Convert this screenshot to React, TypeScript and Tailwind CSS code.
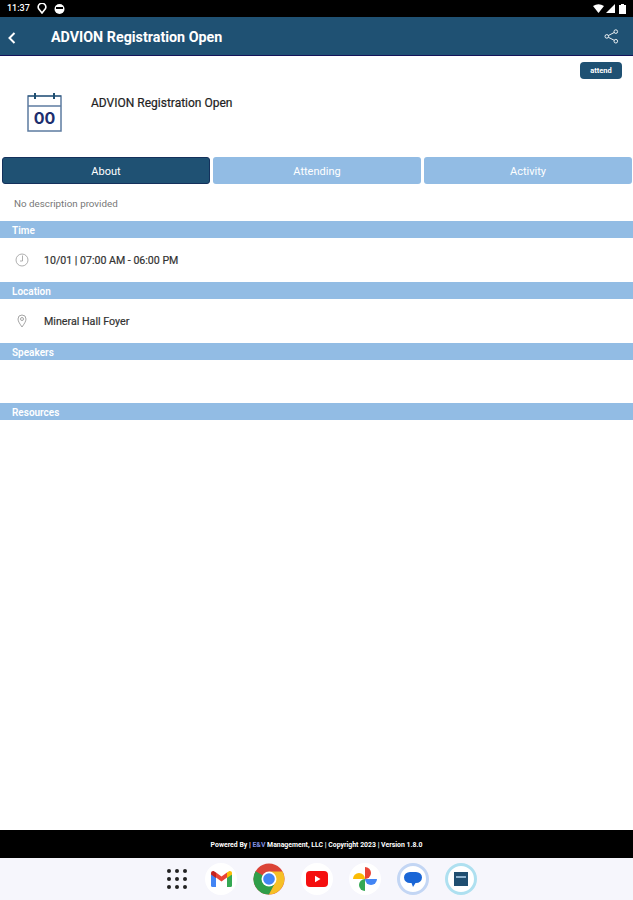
import type { ReactNode } from 'react'

const tabs = ['About', 'Attending', 'Activity']

function SectionBar({ title }: { title: string }) {
  return (
    <div className="h-[17px] bg-[#92bce4] pl-3 pt-px text-[10px] font-semibold leading-[17px] text-white">
      {title}
    </div>
  )
}

function CalendarIcon() {
  return (
    <svg width="36" height="40" viewBox="0 0 36 40" fill="none">
      <rect x="1" y="4" width="33" height="35" stroke="#5c7ba0" strokeWidth="1.5" />
      <path d="M1 14H34" stroke="#5c7ba0" strokeWidth="1.5" />
      <path d="M8 1V7M27 1V7" stroke="#1f4e70" strokeWidth="2" />
      <path d="M1 4H34" stroke="#1f4e70" strokeWidth="1" />
      <text x="17.5" y="32" textAnchor="middle" fontSize="16" fontWeight="700" fill="#1d2f6f" fontFamily="Inter, sans-serif">00</text>
    </svg>
  )
}

function ClockIcon() {
  return (
    <svg width="14" height="14" viewBox="0 0 14 14" fill="none" stroke="#9a9a9a" strokeWidth="0.8">
      <circle cx="7" cy="7" r="6" />
      <path d="M7.500 2.500V8H5" />
    </svg>
  )
}

function PinIcon() {
  return (
    <svg width="10" height="14" viewBox="0 0 10 14" fill="none" stroke="#a5a5a5" strokeWidth="1">
      <path d="M5 13C3 10 1 7.500 1 5A4 4 0 0 1 9 5C9 7.500 7 10 5 13Z" />
      <circle cx="5" cy="5" r="1.500" />
    </svg>
  )
}

function ShareIcon() {
  return (
    <svg width="15" height="15" viewBox="0 0 15 15" fill="none" stroke="#ffffff" strokeWidth="0.9">
      <circle cx="11.800" cy="2.600" r="1.800" />
      <circle cx="2.800" cy="7.400" r="1.800" />
      <circle cx="11.800" cy="12.200" r="1.800" />
      <path d="M4.400 6.500L10.200 3.500M4.400 8.300L10.200 11.300" />
    </svg>
  )
}

function GmailIcon() {
  return (
    <svg width="21" height="16" viewBox="0 0 21 16" fill="none">
      <path d="M0 3V14.500A1.500 1.500 0 0 0 1.500 16H5V6Z" fill="#4285f4" />
      <path d="M21 3V14.500A1.500 1.500 0 0 1 19.500 16H16V6Z" fill="#34a853" />
      <path d="M5 6.500L10.500 10.500L16 6.500V1.500L10.500 5.500L5 1.500Z" fill="#ea4335" />
      <path d="M0 3.500L5 7V1.500L3 0.300C1.700 -0.400 0 0.500 0 2.200Z" fill="#c5221f" />
      <path d="M21 3.500L16 7V1.500L18 0.300C19.300 -0.400 21 0.500 21 2.200Z" fill="#fbbc04" />
    </svg>
  )
}

function ChromeIcon() {
  return (
    <svg width="32" height="32" viewBox="0 0 32 32">
      <circle cx="16" cy="16" r="15.500" fill="#db4437" />
      <path d="M16 16L2.600 8.200A15.500 15.500 0 0 0 16 31.500L23.500 18Z" fill="#2f9e49" />
      <path d="M16 8.500H29.500A15.500 15.500 0 0 1 16 31.500L23 18Z" fill="#f6c026" />
      <circle cx="16" cy="16" r="7.500" fill="#ffffff" />
      <circle cx="16" cy="16" r="5.800" fill="#4285f4" />
    </svg>
  )
}

function YoutubeIcon() {
  return (
    <svg width="22" height="16" viewBox="0 0 22 16">
      <rect width="22" height="16" rx="4" fill="#f50f0f" />
      <path d="M9 4.800V11.200L14.500 8Z" fill="#ffffff" />
    </svg>
  )
}

// pinwheel: four half discs turning clockwise round the centre
function PhotosIcon() {
  return (
    <svg width="24" height="24" viewBox="0 0 24 24">
      <path d="M0 12A6 6 0 0 1 12 12Z" fill="#fbbc04" />
      <path d="M12 0A6 6 0 0 1 12 12Z" fill="#ea4335" />
      <path d="M24 12A6 6 0 0 1 12 12Z" fill="#4285f4" />
      <path d="M12 24A6 6 0 0 1 12 12Z" fill="#34a853" />
    </svg>
  )
}

function DockBubble({ children, ring }: { children: ReactNode; ring?: string }) {
  return (
    <div className={`flex h-8 w-8 items-center justify-center rounded-full bg-white ${ring ?? ''}`}>
      {children}
    </div>
  )
}

export default function App() {
  return (
    <div className="flex h-[900px] w-[633px] flex-col overflow-hidden bg-white font-['Roboto',sans-serif]">
      {/* Status bar */}
      <div className="flex h-[17px] items-center justify-between bg-black pl-[7px] pr-[7px] text-white">
        <div className="flex items-center gap-[7px]">
          <span className="text-[9px] font-medium">11:37</span>
          <svg width="10" height="11" viewBox="0 0 10 11" fill="none" stroke="#fff" strokeWidth="1.600">
            <path d="M5 10L1.500 5.500A3.800 3.800 0 1 1 8.500 5.500Z" />
          </svg>
          <svg width="11" height="10" viewBox="0 0 11 10">
            <circle cx="5.500" cy="5" r="5" fill="#fff" />
            <rect x="2" y="3" width="7" height="2" fill="#000" />
          </svg>
        </div>
        <div className="flex items-center gap-[2px]">
          <svg width="11" height="9" viewBox="0 0 11 9"><path d="M0 2Q5.500 -1.500 11 2L5.500 9Z" fill="#fff" /></svg>
          <svg width="9" height="9" viewBox="0 0 9 9"><path d="M9 0V9H0Z" fill="#fff" /></svg>
          <svg width="7" height="10" viewBox="0 0 7 10" className="ml-[2px]"><path d="M2 0H5V1H7V10H0V1H2Z" fill="#fff" /></svg>
        </div>
      </div>

      {/* Header */}
      <div className="flex h-[39px] items-center justify-between border-b-[1.500px] border-[#14145a] bg-[#1f5173] pl-2 pr-[14px]">
        <div className="flex items-center pt-[3px]">
          <svg width="8" height="12" viewBox="0 0 8 12" fill="none" stroke="#fff" strokeWidth="2">
            <path d="M6.500 1L1.500 6L6.500 11" />
          </svg>
          <span className="ml-[35px] text-[14.300px] font-bold text-white">ADVION Registration Open</span>
        </div>
        <ShareIcon />
      </div>

      {/* Event info */}
      <div className="relative flex h-[101px] items-start pl-[27px] pt-[36px]">
        <CalendarIcon />
        <span className="ml-[28px] mt-[2px] text-[12px] text-[#222] [-webkit-text-stroke:0.2px_#222]">ADVION Registration Open</span>
        <span className="absolute right-[11px] top-[6px] flex h-[17px] w-[42px] items-center justify-center rounded-[4px] bg-[#1f5173] pt-px text-[7.500px] font-bold text-white">
          attend
        </span>
      </div>

      {/* Tabs */}
      <div className="flex h-[27px] gap-[3px] pl-[2px] pr-px">
        {tabs.map((tab, i) => (
          <div
            key={tab}
            className={`flex w-[208px] items-center justify-center rounded-[3px] pt-[3px] text-[11px] text-white ${
              i === 0 ? 'border border-[#14315c] bg-[#1f5173]' : 'bg-[#92bce4]'
            }`}
          >
            {tab}
          </div>
        ))}
      </div>

      <div className="flex h-[37px] items-start pl-[14px] pt-[14px] text-[9.800px] leading-[12px] text-[#777]">
        No description provided
      </div>

      <SectionBar title="Time" />
      <div className="flex h-[44px] items-center pl-[15px]">
        <ClockIcon />
        <span className="ml-[15px] pt-[2px] text-[10.600px] text-[#333] [-webkit-text-stroke:0.2px_#333]">10/01 | 07:00 AM - 06:00 PM</span>
      </div>

      <SectionBar title="Location" />
      <div className="flex h-[44px] items-center pl-[17px]">
        <PinIcon />
        <span className="ml-[17px] pt-[2px] text-[10.700px] text-[#333] [-webkit-text-stroke:0.2px_#333]">Mineral Hall Foyer</span>
      </div>

      <SectionBar title="Speakers" />
      <div className="h-[43px]" />

      <SectionBar title="Resources" />
      <div className="flex-1" />

      {/* Footer */}
      <div className="flex h-[28px] items-center justify-center bg-black pt-[2px] text-[6.900px] font-bold text-white">
        Powered By&nbsp;|&nbsp;<span className="text-[#7f8fe0]">E&amp;V</span>&nbsp;Management, LLC | Copyright 2023 | Version 1.8.0
      </div>

      {/* Android dock */}
      <div className="flex h-[42px] items-center gap-4 bg-[#f6f6fc] pl-[167px]">
        <div className="mr-[2px] grid grid-cols-3 gap-[4px]">
          {Array.from({ length: 9 }).map((_, i) => (
            <div key={i} className="h-[4px] w-[4px] rounded-full bg-[#222]" />
          ))}
        </div>
        <DockBubble><GmailIcon /></DockBubble>
        <ChromeIcon />
        <DockBubble><YoutubeIcon /></DockBubble>
        <DockBubble><PhotosIcon /></DockBubble>
        <DockBubble ring="border-[3px] border-[#c3d6f4]">
          <svg width="18" height="15" viewBox="0 0 18 15">
            <path d="M6 0H12A6 5.500 0 0 1 12 11H11.500L9 15L7.500 11H6A6 5.500 0 0 1 6 0Z" fill="#1a66d6" />
          </svg>
        </DockBubble>
        <DockBubble ring="border-[3px] border-[#aee0f0]">
          <div className="flex h-[14px] w-[14px] items-start justify-center bg-[#1f4e70] pt-[4px]">
            <div className="h-[2px] w-[10px] bg-[#8fb4d0]" />
          </div>
        </DockBubble>
      </div>
    </div>
  )
}
